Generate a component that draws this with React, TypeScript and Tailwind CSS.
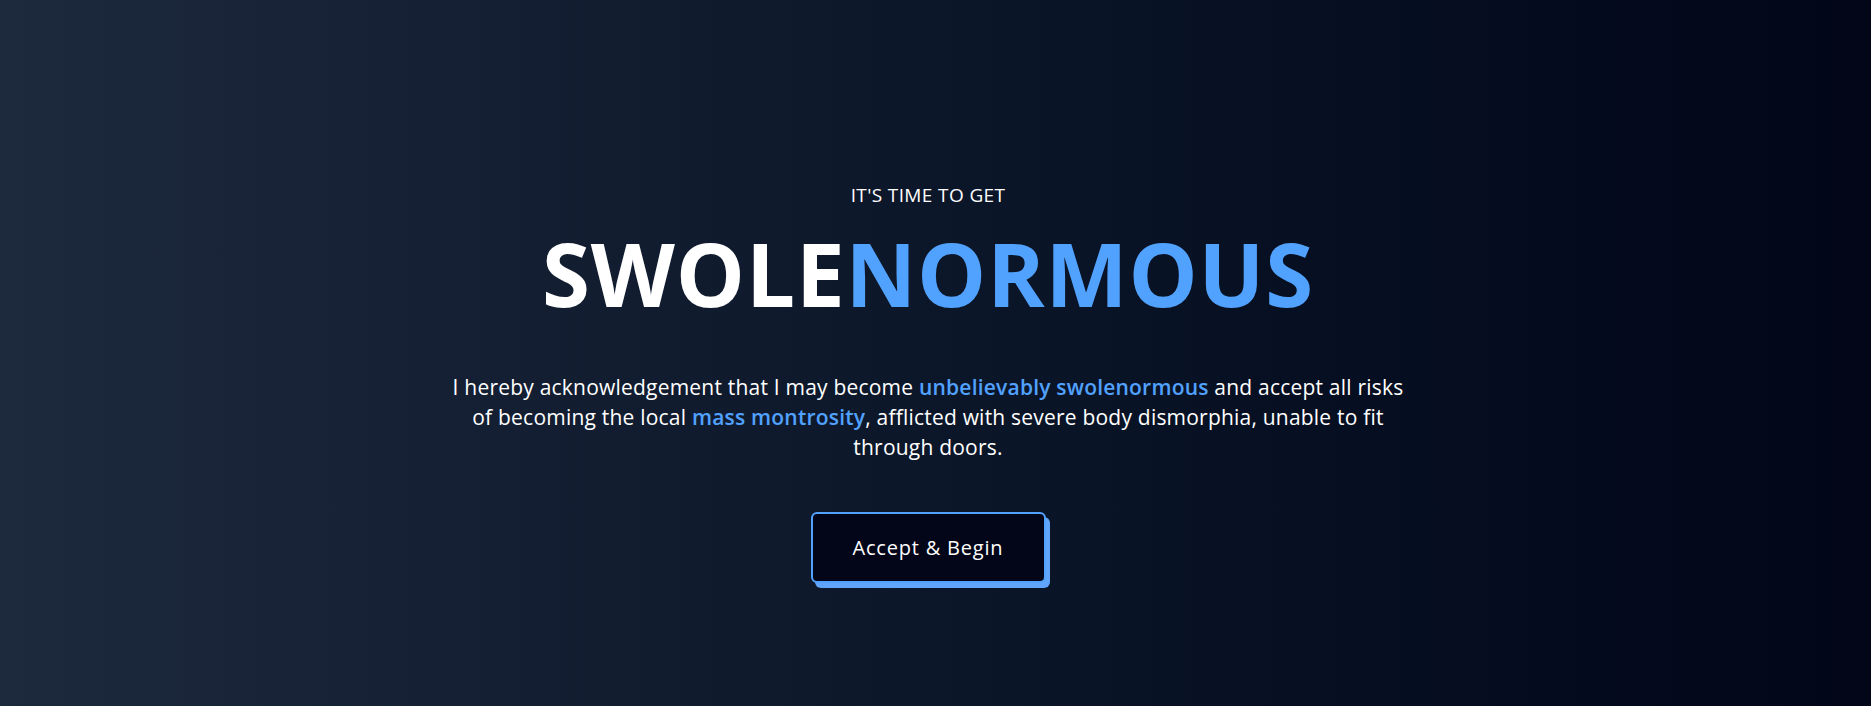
const App = () => {
  return (
    <div
      className="min-h-screen w-full bg-linear-to-r from-slate-800 to-slate-950 flex flex-col items-center pt-[181px] pr-[15px] text-white"
      style={{ fontFamily: '"Open Sans", "Liberation Sans", sans-serif' }}
    >
      <p className="text-[19px] leading-7 tracking-[0.02em] uppercase">It's time to get</p>

      <h1 className="mt-[21px] text-[87px] font-bold leading-none tracking-[0.01em]">
        SWOLE<span className="text-blue-400">NORMOUS</span>
      </h1>

      <p className="mt-[55px] max-w-[975px] text-center text-[21px] leading-[30px] tracking-[0.01em]">
        I hereby acknowledgement that I may become{" "}
        <span className="font-semibold text-blue-400">unbelievably swolenormous</span> and
        accept all risks of becoming the local{" "}
        <span className="font-semibold text-blue-400">mass montrosity</span>, afflicted with
        severe body dismorphia, unable to fit through doors.
      </p>

      <button className="mt-[50px] h-[71px] w-[235px] rounded-md border-2 border-blue-400 bg-slate-950 text-[20px] leading-7 tracking-[0.04em] shadow-[4px_5px_0_0_#60a5fa]">
        Accept &amp; Begin
      </button>
    </div>
  );
};

export default App;
